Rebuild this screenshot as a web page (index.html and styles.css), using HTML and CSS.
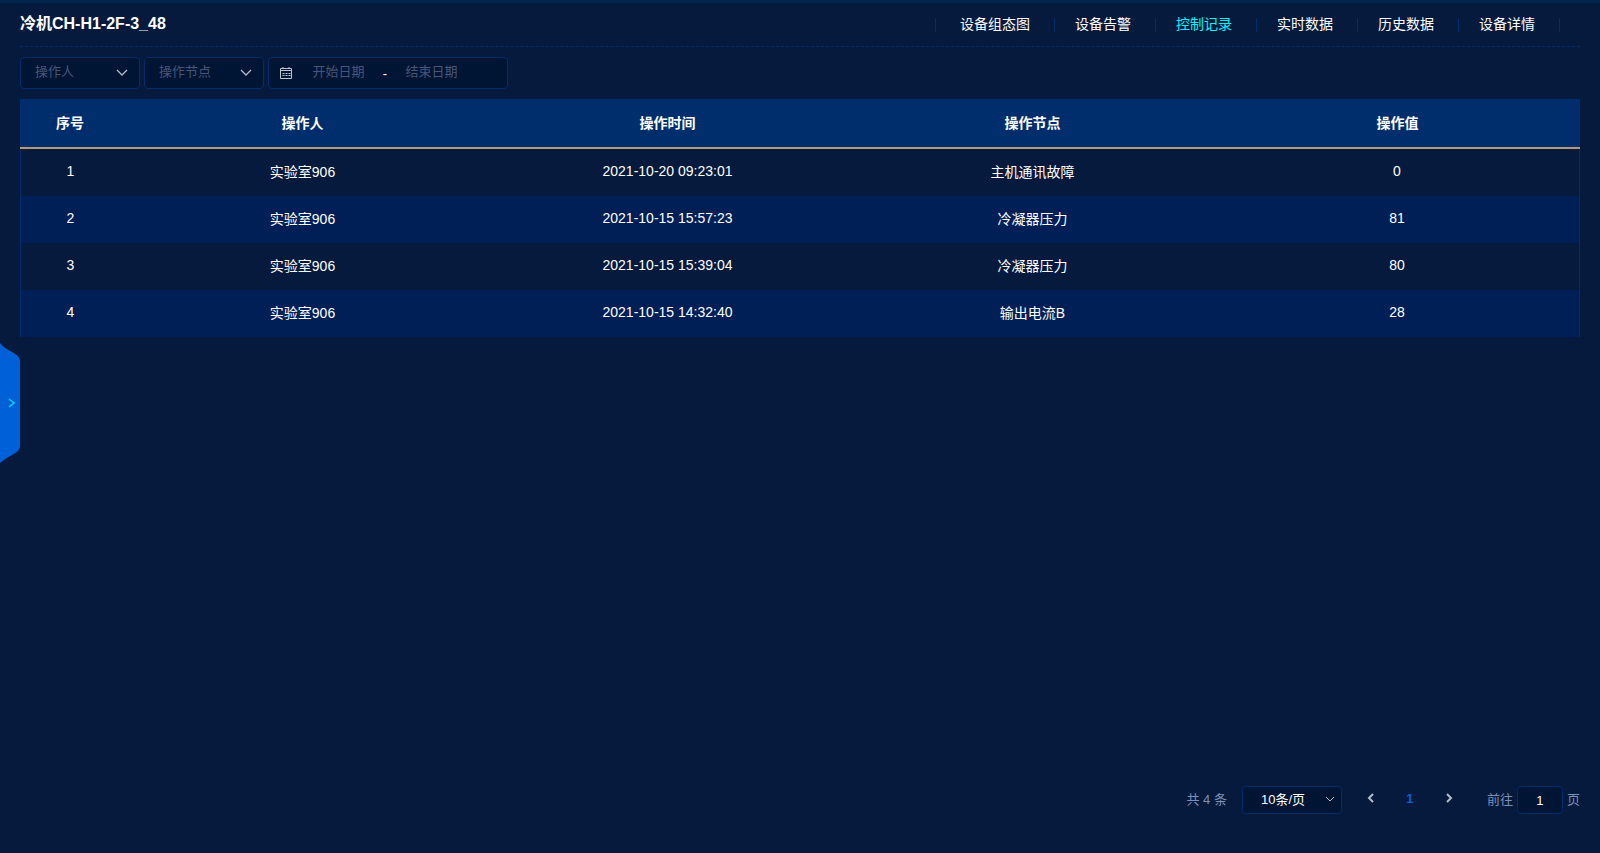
FILE: index.html
```html
<!DOCTYPE html>
<html lang="zh-CN">
<head>
<meta charset="utf-8">
<title>控制记录</title>
<link rel="stylesheet" href="styles.css">
</head>
<body>
<main class="page">
  <header class="header">
    <h1 class="title">冷机CH-H1-2F-3_48</h1>
    <nav class="nav">
      <a class="nav-item" href="#config">设备组态图</a>
      <a class="nav-item" href="#alarm">设备告警</a>
      <a class="nav-item active" href="#control">控制记录</a>
      <a class="nav-item" href="#realtime">实时数据</a>
      <a class="nav-item" href="#history">历史数据</a>
      <a class="nav-item" href="#detail">设备详情</a>
    </nav>
  </header>

  <form class="filters">
    <div class="select">
      <select class="select-control" aria-label="操作人"><option>操作人</option></select>
      <svg class="select-arrow" width="12" height="8" viewBox="0 0 12 8"><path d="M1 1l5 5 5-5"/></svg>
    </div>
    <div class="select">
      <select class="select-control" aria-label="操作节点"><option>操作节点</option></select>
      <svg class="select-arrow" width="12" height="8" viewBox="0 0 12 8"><path d="M1 1l5 5 5-5"/></svg>
    </div>
    <div class="range">
      <svg class="calendar" width="14" height="14" viewBox="0 0 14 14"><path d="M1.500 2.500h11v10h-11zM1.500 4.500h11M4 1v2M10 1v2"/><path class="calendar-days" d="M3.500 7.500h8M3.500 9.500h8"/></svg>
      <input class="range-input" type="text" placeholder="开始日期" aria-label="开始日期">
      <span class="range-separator">-</span>
      <input class="range-input" type="text" placeholder="结束日期" aria-label="结束日期">
    </div>
  </form>

  <table class="table">
    <colgroup><col class="col-index"><col><col><col><col></colgroup>
    <thead>
      <tr><th>序号</th><th>操作人</th><th>操作时间</th><th>操作节点</th><th>操作值</th></tr>
    </thead>
    <tbody>
      <tr><td>1</td><td>实验室906</td><td>2021-10-20 09:23:01</td><td>主机通讯故障</td><td>0</td></tr>
      <tr><td>2</td><td>实验室906</td><td>2021-10-15 15:57:23</td><td>冷凝器压力</td><td>81</td></tr>
      <tr><td>3</td><td>实验室906</td><td>2021-10-15 15:39:04</td><td>冷凝器压力</td><td>80</td></tr>
      <tr><td>4</td><td>实验室906</td><td>2021-10-15 14:32:40</td><td>输出电流B</td><td>28</td></tr>
    </tbody>
  </table>

  <footer class="pagination">
    <span class="total">共 4 条</span>
    <div class="select select-small">
      <select class="select-control" aria-label="每页条数"><option>10条/页</option></select>
      <svg class="select-arrow" width="10" height="7" viewBox="0 0 10 7"><path d="M1 1l4 4 4-4"/></svg>
    </div>
    <div class="pager">
      <button class="pager-button" type="button" aria-label="上一页"><svg width="8" height="10" viewBox="0 0 8 10"><path d="M6 1L2 5l4 4"/></svg></button>
      <button class="pager-button current" type="button">1</button>
      <button class="pager-button" type="button" aria-label="下一页"><svg width="8" height="10" viewBox="0 0 8 10"><path d="M2 1l4 4-4 4"/></svg></button>
    </div>
    <div class="jump">
      <label class="jump-text" for="jump-page">前往</label>
      <input class="jump-input" id="jump-page" type="text" value="1">
      <span class="jump-text">页</span>
    </div>
  </footer>
</main>
<button class="drawer" type="button" aria-label="展开">
  <svg width="20" height="120" viewBox="0 0 20 120"><path class="drawer-shape" d="M0 0C3 4 7 6 12 9C17 12 20 14 20 18V103C20 107 17 109 12 112C7 115 3 117 0 120Z"/><path class="drawer-arrow" d="M9 56l5 4-5 4"/></svg>
</button>
</body>
</html>
```
FILE: styles.css
```css
* {
  box-sizing: border-box;
}

body {
  margin: 0;
  background: #051a3c;
  color: #fff;
  font: 14px "Liberation Sans", "Noto Sans CJK SC", sans-serif;
}

button,
input,
select {
  font: inherit;
  color: inherit;
}

.page {
  display: flex;
  flex-direction: column;
  min-height: 100vh;
  padding: 0 20px 39px;
  border-top: 3px solid #00264d;
}

.header {
  display: flex;
  justify-content: space-between;
  height: 44px;
  border-bottom: 1px dashed #002d6b;
}

.title {
  margin: 0;
  font-size: 16px;
  line-height: 42px;
}

.nav {
  display: flex;
  align-items: center;
  padding-right: 20px;
}

.nav-item {
  padding: 0 24px 2px 20px;
  border-right: 1px solid #002d6b;
  color: #fff;
  line-height: 12px;
  text-decoration: none;
}

.nav-item:first-child {
  padding-left: 24px;
  border-left: 1px solid #002d6b;
}

.nav-item.active {
  color: #00f6ff;
}

.filters {
  display: flex;
  gap: 4px;
  padding: 10px 0;
  font-size: 13px;
}

.select {
  position: relative;
  width: 120px;
  height: 32px;
}

.select-control {
  display: block;
  width: 100%;
  height: 100%;
  padding: 0 30px 3px 14px;
  appearance: none;
  border: 1px solid #002d6b;
  border-radius: 4px;
  background: #001534;
  color: #46567a;
}

.select-arrow {
  position: absolute;
  top: 12px;
  right: 12px;
  fill: none;
  stroke: #b4bccc;
  stroke-width: 1.3;
  pointer-events: none;
}

.range {
  display: flex;
  align-items: center;
  width: 240px;
  height: 32px;
  padding: 0 10px;
  border: 1px solid #002d6b;
  border-radius: 4px;
  background: #001534;
}

.calendar {
  margin-right: 4px;
  fill: none;
  stroke: #c0c4cc;
}

.calendar-days {
  stroke-dasharray: 2 1;
}

.range-input {
  width: 83px;
  padding: 0 0 3px;
  border: 0;
  background: transparent;
  text-align: center;
}

.range-input::placeholder {
  color: #46567a;
}

.range-separator {
  width: 10px;
  text-align: center;
}

.table {
  width: 100%;
  table-layout: fixed;
  border-spacing: 0;
  text-align: center;
}

.col-index {
  width: 100px;
}

.table th {
  height: 50px;
  padding: 0 0 2px;
  border-bottom: 2px solid #b59a72;
  background: #002d6b;
}

.table td {
  height: 47px;
  padding: 0 0 3px;
}

.table td:first-child {
  border-left: 1px solid #002d6b;
}

.table td:last-child {
  border-right: 1px solid #002d6b;
}

.table tbody tr:nth-child(even) {
  background: #001f56;
}

.pagination {
  display: flex;
  align-items: center;
  justify-content: flex-end;
  margin-top: auto;
  color: #7f8fb5;
  font-size: 13px;
}

.total {
  margin-right: 15px;
  padding-bottom: 4px;
}

.select-small {
  width: 100px;
  height: 28px;
}

.select-small .select-control {
  padding: 0 24px 2px 18px;
  color: #fff;
}

.select-small .select-arrow {
  top: 10px;
  right: 7px;
  stroke-width: 1;
}

.pager {
  display: flex;
  gap: 9px;
  margin: 0 23px 0 14px;
  padding-bottom: 3px;
}

.pager-button {
  width: 30px;
  padding: 0;
  border: 0;
  background: transparent;
  color: #b4bccc;
}

.pager-button svg {
  fill: none;
  stroke: currentColor;
  stroke-width: 2;
}

.pager-button.current {
  color: #0060d8;
  font-weight: bold;
}

.jump {
  display: flex;
  align-items: center;
  gap: 4px;
}

.jump-text {
  padding-bottom: 4px;
}

.jump-input {
  width: 46px;
  height: 28px;
  border: 1px solid #002d6b;
  border-radius: 4px;
  background: #001534;
  color: #fff;
  text-align: center;
}

.drawer {
  position: fixed;
  top: 343px;
  left: 0;
  padding: 0;
  border: 0;
  background: transparent;
}

.drawer svg {
  display: block;
}

.drawer-shape {
  fill: #0060d8;
}

.drawer-arrow {
  fill: none;
  stroke: #00d8ff;
  stroke-width: 1.5;
}
```
